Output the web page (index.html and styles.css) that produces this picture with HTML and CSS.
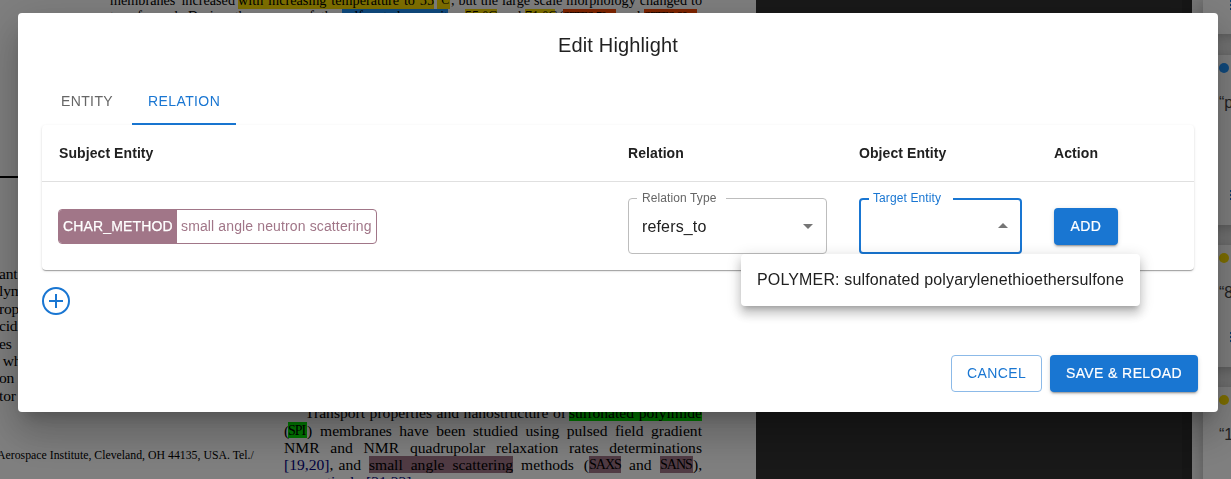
FILE: index.html
```html
<!DOCTYPE html>
<html lang="en">
<head>
<meta charset="utf-8">
<title>Edit Highlight</title>
<link rel="stylesheet" href="styles.css">
</head>
<body>
<div class="app">
  <main class="viewer">
    <div class="page">
      <div class="abstract">
        <p class="line"><span style="width:125px">membranes increased</span><mark class="yellow gap-s" style="width:196px">with increasing temperature to 55</mark><mark class="yellow unit" style="width:13px">°C</mark><span style="width:251px">, but the large scale morphology changed to</span></p>
        <p class="line second"><span style="width:228px">transformed. During the course of the</span><mark class="blue" style="width:106px">sulfonated unit</mark><span style="width:9px">–</span><mark class="yellow" style="width:32px">55 °C</mark><span style="width:20px">and</span><mark class="yellow" style="width:30px">71 °C</mark><span class="paren" style="width:4px">(</span><mark class="orange caps" style="width:53px">SPTES-70</mark><span style="width:20px">and</span><mark class="orange caps" style="width:53px">SPTES-80</mark></p>
      </div>
      <hr class="rule">
      <div class="columns">
        <div class="left">
          <p>ant</p><p>lym</p><p>rop</p><p>cidi</p><p>es&nbsp; in</p><p>&nbsp;wh</p><p>on a</p><p>tor</p>
          <div class="footnote">Aerospace Institute, Cleveland, OH 44135, USA. Tel./</div>
        </div>
        <div class="right">
          <p class="line indent"><span style="width:261px">Transport properties and nanostructure of</span><mark class="green gap-s" style="width:133px">sulfonated polyimide</mark></p>
          <p class="line"><span style="width:4px">(</span><mark class="green caps" style="width:19px">SPI</mark><span style="width:5px">)</span><span class="gap" style="width:382px">membranes have been studied using pulsed field gradient</span></p>
          <p class="line"><span style="width:418px">NMR and NMR quadrupolar relaxation rates determinations</span></p>
          <p class="line"><span style="width:77px"><span class="cite">[19,20]</span>, and</span><mark class="mauve gap" style="width:144px">small angle scattering</mark><span class="gap" style="width:68px">methods (</span><mark class="mauve caps" style="width:32px">SAXS</mark><span class="gap" style="width:23px">and</span><mark class="mauve caps gap" style="width:33px">SANS</mark><span style="width:9px">),</span></p>
          <p class="line indent"><span class="cite">pectively [21,22].</span></p>
        </div>
      </div>
    </div>
    <div class="scrollbar"></div>
  </main>
  <aside class="sidebar">
    <section class="card first"><i class="more"></i></section>
    <section class="card second"><b class="dot blue"></b><q>poly</q><i class="more"></i></section>
    <section class="card third"><b class="dot yellow"></b><q>80</q><i class="more"></i></section>
    <section class="card fourth"><b class="dot yellow"></b><q>1</q></section>
  </aside>
</div>
<div class="backdrop">
  <div class="dialog" role="dialog">
    <h2>Edit Highlight</h2>
    <nav class="tabs"><button class="tab">ENTITY</button><button class="tab active">RELATION</button></nav>
    <div class="table">
      <div class="row head"><div>Subject Entity</div><div>Relation</div><div>Object Entity</div><div>Action</div></div>
      <div class="row body">
        <div><span class="chip"><strong>CHAR_METHOD</strong><em>small angle neutron scattering</em></span></div>
        <div>
          <fieldset class="select relation"><legend>Relation Type</legend><span>refers_to</span>
            <svg viewBox="0 0 24 24"><path d="M7 10l5 5 5-5z"/></svg></fieldset>
        </div>
        <div class="anchor">
          <fieldset class="select target"><legend>Target Entity</legend><span></span>
            <svg viewBox="0 0 24 24"><path d="M7 14l5-5 5 5z"/></svg></fieldset>
          <div class="menu">POLYMER: sulfonated polyarylenethioethersulfone</div>
        </div>
        <div><button class="btn solid add">ADD</button></div>
      </div>
    </div>
    <svg class="plus" viewBox="0 0 28 28"><circle cx="14" cy="14" r="13"/><path d="M14 7v14M7 14h14"/></svg>
    <footer><button class="btn outline">CANCEL</button><button class="btn solid save">SAVE &amp; RELOAD</button></footer>
  </div>
</div>
</body>
</html>
```
FILE: styles.css
```css
* { box-sizing: border-box; }
body { margin: 0; height: 479px; overflow: hidden; font-family: "Liberation Sans", Arial, sans-serif; color: #212121; }
p, h2 { margin: 0; }
button { font: inherit; border: 0; padding: 0; }
.app { display: flex; height: 479px; overflow: hidden; }
.viewer { display: flex; justify-content: space-between; width: 1192px; background: #323232; }
.page { width: 756px; height: 479px; overflow: hidden; background: #fff; color: #000; font: 15.6px/17.3px "Liberation Serif", serif; }
.scrollbar { width: 10px; background: #2c2c2c; }

/* document text */
.line { display: flex; height: 17.3px; white-space: nowrap; }
.line > * { flex: none; text-align: justify; text-align-last: justify; }
.gap { margin-left: 8px; }
.gap-s { margin-left: 3px; }
.caps { font-size: 14px; letter-spacing: -1px; }
mark { color: inherit; height: 16.5px; }
.yellow { background: #ffe000; }
.blue { background: #2196ff; }
.orange { background: #ff4a00; }
.green { background: #00ee00; }
.mauve { background: #a17688; }
.cite { color: #000080; }
.abstract { width: 600px; margin: -8px 0 0 110px; font-size: 14.2px; }
.abstract .second { gap: 4px; font-size: 14px; line-height: 15px; }
.second .caps { font-size: 12px; }
.second .paren { margin-right: -4px; }
.unit { font-size: 12px; letter-spacing: -.5px; margin: 0 1px 0 3px; }
.rule { border: 0; height: 2px; width: 300px; background: #000; margin: 149.4px 0 0; }
.columns { display: flex; margin-top: 87px; }
.left { width: 284px; white-space: nowrap; }
.left p { height: 17.4px; margin-left: -1px; letter-spacing: -.2px; }
.footnote { margin: 43px 0 0 -3px; font-size: 11.8px; line-height: 17px; width: 256px; text-align-last: justify; }
.right { width: 418px; margin-top: 139.3px; }
.indent { padding-left: 21px; }

/* annotation list */
.sidebar { width: 39px; padding-left: 11px; background: #eee; overflow: hidden; }
.card { display: flex; flex-direction: column; position: relative; width: 220px; background: #fff; margin-bottom: 20px; padding: 8px 16px; box-shadow: 0 3px 14px rgba(0,0,0,.28); }
.first { height: 34px; margin-bottom: 21px; }
.second.card { height: 170px; }
.third { height: 122px; }
.fourth { height: 110px; }
.dot { width: 10px; height: 10px; border-radius: 50%; }
.card q { font-size: 16px; line-height: 20px; margin-top: 20px; quotes: "“" "”"; color: #444; }
.more { width: 4px; height: 12px; margin: auto 0 15px 11px; background: repeating-linear-gradient(#1976d2 0 2px, transparent 2px 4px); }
.first .more { margin: -8px 0 0 11px; }

/* dialog */
.backdrop { position: fixed; inset: 0; background: rgba(0,0,0,.5); padding: 13px 13px 0 18px; }
.dialog { width: 1200px; height: 399px; background: #fff; border-radius: 4px; padding: 16px 24px 20px; box-shadow: 0 11px 15px -7px rgba(0,0,0,.2), 0 24px 38px 3px rgba(0,0,0,.14), 0 9px 46px 8px rgba(0,0,0,.12); display: flex; flex-direction: column; }
h2 { text-align: center; font-size: 20px; font-weight: 400; line-height: 32px; letter-spacing: .15px; }
.tabs { display: flex; margin-top: 16px; height: 48px; }
.tab { min-width: 90px; padding: 0 16px; font-size: 14px; letter-spacing: .4px; color: #666; background: none; }
.tab.active { width: 104px; color: #1976d2; border-bottom: 2px solid #1976d2; padding-top: 2px; }
.table { width: 1152px; height: 145px; border-radius: 4px; box-shadow: 0 2px 1px -1px rgba(0,0,0,.2), 0 1px 1px rgba(0,0,0,.14), 0 1px 3px rgba(0,0,0,.12); }
.row { display: grid; grid-template-columns: 570px 231px 195px 156px; }
.row > div { padding: 0 16px; }
.head { height: 57px; align-items: center; border-bottom: 1px solid #e0e0e0; font-size: 14px; font-weight: 700; letter-spacing: .08px; }
.head > div:first-child { padding-left: 17px; }
.body { height: 88px; align-items: center; }
.chip { display: inline-flex; width: 319px; height: 35px; line-height: 33px; border: 1px solid #a17688; border-radius: 4px; overflow: hidden; font-size: 14px; white-space: nowrap; vertical-align: top; }
.chip strong { width: 118px; padding-left: 4px; background: #a17688; color: #fff; font-weight: 400; letter-spacing: .15px; -webkit-text-stroke: .25px #fff; }
.chip em { font-style: normal; color: #a17688; padding-left: 4px; letter-spacing: .13px; }
.select { display: flex; align-items: center; justify-content: space-between; margin: -5px 0 0; height: 61px; min-width: 0; border: 1px solid #bdbdbd; border-radius: 4px; padding: 0 6px 4px 13px; font-size: 16px; letter-spacing: .15px; }
.select svg { width: 24px; height: 24px; fill: #757575; }
.select legend { height: 11px; line-height: 11px; font-size: 12px; color: #666; padding: 0 5px; margin-left: -5px; letter-spacing: .1px; }
.relation { width: 199px; }
.relation svg { margin-top: -2px; }
.relation legend { width: 89px; }
.target { width: 163px; border: 2px solid #1976d2; padding-left: 12px; padding-right: 5px; }
.target legend { width: 84px; padding-left: 4px; margin-left: -4px; color: #1976d2; }
.anchor { position: relative; }
.menu { position: absolute; left: -102px; top: 56px; width: 399px; height: 52px; padding-left: 16px; background: #fff; border-radius: 4px; line-height: 52px; font-size: 16px; letter-spacing: .15px; white-space: nowrap; box-shadow: 0 5px 5px -3px rgba(0,0,0,.2), 0 8px 10px 1px rgba(0,0,0,.14), 0 3px 14px 2px rgba(0,0,0,.12); }
.btn { height: 37px; border-radius: 4px; font-size: 14px; letter-spacing: .4px; text-align: center; }
.solid { background: #1976d2; color: #fff; -webkit-text-stroke: .2px #fff; box-shadow: 0 3px 1px -2px rgba(0,0,0,.2), 0 2px 2px rgba(0,0,0,.14), 0 1px 5px rgba(0,0,0,.12); }
.outline { width: 91px; border: 1px solid #8cbae8; background: #fff; color: #1976d2; }
.add { width: 64px; display: block; }
.save { width: 148px; }
.plus { width: 28px; height: 28px; margin-top: 17px; fill: none; stroke: #1976d2; stroke-width: 2; }
footer { display: flex; justify-content: flex-end; gap: 8px; margin: auto -4px 0 0; }
footer .btn { padding-bottom: 2px; }
```
